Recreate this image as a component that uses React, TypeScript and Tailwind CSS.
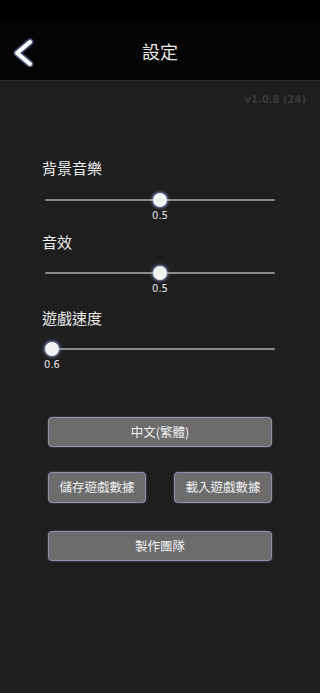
import React from "react";

const font = { fontFamily: '"Noto Sans CJK TC", "Noto Sans", sans-serif' };

function Slider({ pos, value }: { pos: number; value: string }) {
  return (
    <div className="relative ml-[45px] w-[230px] h-[14px]">
      <div className="absolute left-0 right-0 top-[6px] h-[2px] bg-[#8a8a8a] rounded-full" />
      <div
        className="absolute top-0 w-[14px] h-[14px] -ml-[7px] rounded-full bg-[#f2f2f2] shadow-[0_0_3px_1px_rgba(150,170,230,0.8)]"
        style={{ left: `${pos}px` }}
      />
      <div
        className="absolute top-[17px] w-[30px] -ml-[15px] text-center text-[10px] leading-[12px] text-[#e6e6e6]"
        style={{ left: `${pos}px`, fontFamily: '"DejaVu Sans", sans-serif' }}
      >
        {value}
      </div>
    </div>
  );
}

function Btn({ children, className }: { children: React.ReactNode; className?: string }) {
  return (
    <div
      className={`flex items-center justify-center rounded-[4px] bg-[#6c6c6c] border border-[#8e93a8] shadow-[0_0_2px_rgba(140,150,200,0.6)] text-[12.5px] text-[#f0f0f0] ${className ?? ""}`}
    >
      {children}
    </div>
  );
}

export default function App() {
  return (
    <div className="w-[320px] h-[693px] bg-[#1e1e1e] overflow-hidden" style={font}>
      <div className="h-[22px] bg-black" />
      <div className="relative h-[59px] bg-[#040404] border-b border-[#2a2a2a] flex items-center justify-center">
        <svg className="absolute left-[10px] top-[15px]" width="28" height="30" viewBox="0 0 28 30">
          <path d="M20 5 L7 16 L20 27" fill="none" stroke="#9fb4ff" strokeOpacity="0.45" strokeWidth="7" strokeLinecap="round" strokeLinejoin="round" />
          <path d="M20 5 L7 16 L20 27" fill="none" stroke="#ffffff" strokeWidth="4" strokeLinecap="round" strokeLinejoin="round" />
        </svg>
        <span className="text-[18px] text-[#e8e8e8] leading-none">設定</span>
      </div>
      <div className="pr-[14px] pt-[13px] text-right text-[10px] leading-[12px] font-bold text-[#3a3a3a]" style={{ fontFamily: '"DejaVu Sans", sans-serif' }}>
        v1.0.8 (24)
      </div>
      <div className="pl-[42px] mt-[52px] h-[20px] text-[15px] leading-[20px] text-[#ececec]">背景音樂</div>
      <div className="mt-[15px] h-[39px]">
        <Slider pos={115} value="0.5" />
      </div>
      <div className="pl-[42px] h-[20px] text-[15px] leading-[20px] text-[#ececec]">音效</div>
      <div className="mt-[14px] h-[42px]">
        <Slider pos={115} value="0.5" />
      </div>
      <div className="pl-[42px] h-[20px] text-[15px] leading-[20px] text-[#ececec]">遊戲速度</div>
      <div className="mt-[14px] h-[14px]">
        <Slider pos={7} value="0.6" />
      </div>
      <div className="flex flex-col items-start pl-[48px] mt-[61px]">
        <Btn className="w-[224px] h-[30px]">中文(繁體)</Btn>
        <div className="flex w-[224px] justify-between mt-[25px]">
          <Btn className="w-[98px] h-[31px] text-[11.5px]">儲存遊戲數據</Btn>
          <Btn className="w-[98px] h-[31px] text-[11.5px]">載入遊戲數據</Btn>
        </div>
        <Btn className="w-[224px] h-[30px] mt-[28px]">製作團隊</Btn>
      </div>
    </div>
  );
}
